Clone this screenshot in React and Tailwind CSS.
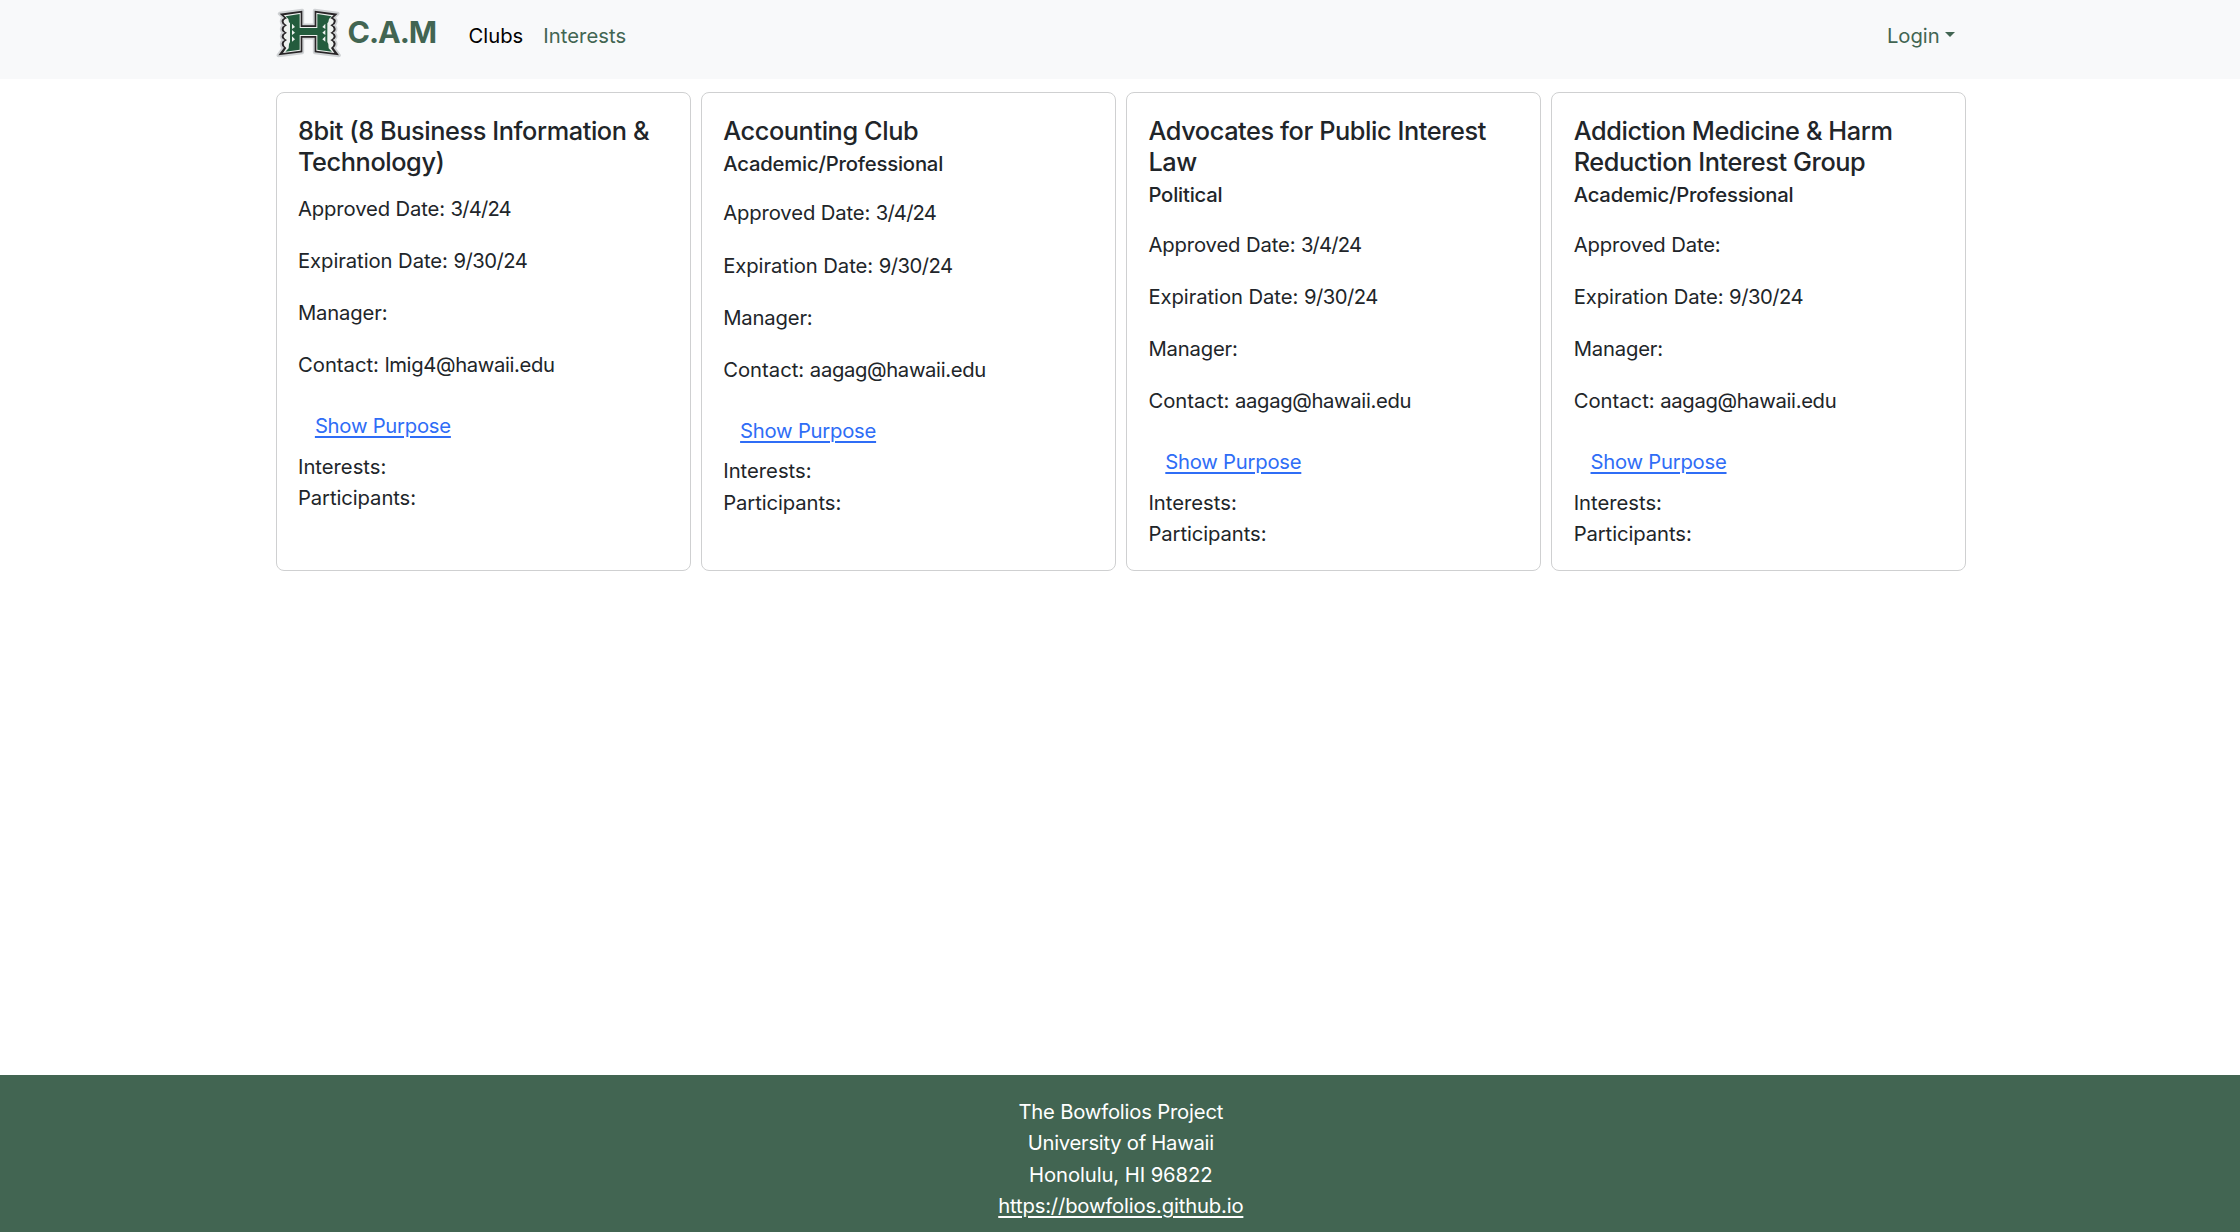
const clubs = [
  {
    name: "8bit (8 Business Information & Technology)",
    type: "",
    approved: "3/4/24",
    expiration: "9/30/24",
    contact: "lmig4@hawaii.edu",
  },
  {
    name: "Accounting Club",
    type: "Academic/Professional",
    approved: "3/4/24",
    expiration: "9/30/24",
    contact: "aagag@hawaii.edu",
  },
  {
    name: "Advocates for Public Interest Law",
    type: "Political",
    approved: "3/4/24",
    expiration: "9/30/24",
    contact: "aagag@hawaii.edu",
  },
  {
    name: "Addiction Medicine & Harm Reduction Interest Group",
    type: "Academic/Professional",
    approved: "",
    expiration: "9/30/24",
    contact: "aagag@hawaii.edu",
  },
];

const OUTLINE =
  "M29 41 L97 32 V76 H134 V32 L203 41 L189 54 Q199 58 197 65 Q196 73 188 76 Q197 80 197 87 Q197 95 188 98 Q197 102 197 109 Q197 117 188 120 Q197 124 197 131 Q197 139 190 143 L207 166 L134 157 V113 H97 V157 L25 166 L42 143 Q35 139 35 131 Q35 124 44 120 Q35 117 35 109 Q35 102 44 98 Q35 95 35 87 Q35 80 44 76 Q36 73 35 65 Q34 58 43 54 Z";

const INNER =
  "M41 46 L92 38 V81 H139 V38 L191 46 L181 55 Q193 60 191 66 Q190 72 181 76 Q191 81 191 87 Q191 94 181 98 Q191 103 191 109 Q191 116 181 120 Q191 125 191 131 Q191 138 183 144 L193 159 L139 152 V108 H92 V152 L39 159 L49 144 Q41 138 41 131 Q41 125 51 120 Q41 116 41 109 Q41 103 51 98 Q41 94 41 87 Q41 81 51 76 Q42 72 41 66 Q39 60 51 55 Z";

const GREEN =
  "M47 49 L89 42 V84 H142 V42 L185 49 L177 57 L175 66 L172 70 V126 L175 132 L176 145 L186 155 L142 149 V105 H89 V149 L46 155 L56 145 L57 132 L60 126 V70 L57 66 L55 57 Z";

function Logo() {
  return (
    <svg className="h-[64px] w-[80px] shrink-0" viewBox="0 0 240 192" aria-hidden="true">
      <path d={OUTLINE} fill="#c3c6c9" stroke="#bfc2c5" strokeWidth="11" strokeLinejoin="round" opacity="0.7" />
      <path d={OUTLINE} fill="#282527" />
      <path d={INNER} fill="#eef2ef" />
      <path d={GREEN} fill="#235c3d" />
      <path
        d="M66 71 L75 81 L66 87 Z M66 90 L75 98 L66 105 Z M66 109 L75 118 L66 125 Z M166 71 L157 81 L166 87 Z M166 90 L157 98 L166 105 Z M166 109 L157 118 L166 125 Z"
        fill="#eef2ef"
      />
    </svg>
  );
}

function NavBar() {
  return (
    <header className="h-[79px] bg-[#f8f9fa]">
      <div className="mx-auto flex h-16 w-[1700px] items-start leading-[31.3px] text-[#426552]">
        <a className="flex items-start" href="#home">
          <Logo />
          <span className="-ml-[2.5px] mt-[17px] w-[112.5px] text-[30.4px] font-bold tracking-[-0.034em]">C.A.M</span>
        </a>
        <nav className="mt-[20px] flex flex-1 text-[20.24px]">
          <a className="ml-[8.5px] w-[74.7px] text-black" href="#clubs">Clubs</a>
          <a className="tracking-[0.003em]" href="#interests">Interests</a>
          <button className="ml-auto mr-[14.7px] flex items-start">
            Login
            <span className="ml-[5.6px] mt-[12px] border-x-[5.6px] border-t-[5.6px] border-x-transparent border-t-[#426552]" />
          </button>
        </nav>
      </div>
    </header>
  );
}

function ClubCard({ club }) {
  return (
    <article className="rounded-[8px] border border-[#cfd0d1] px-[21.2px] pb-[20.6px] pt-[21.2px] leading-[31.3px]">
      <h2 className="pt-px text-[25.3px] font-medium tracking-[-0.016em]">{club.name}</h2>
      {club.type ? (
        <h3 className="mb-[18.1px] mt-[1.6px] font-medium tracking-[-0.009em]">{club.type}</h3>
      ) : (
        <div className="h-[15px]" />
      )}
      <div className="flex flex-col items-start gap-[20.87px]">
        <p className="tracking-[-0.006em]">
          Approved Date: <span className="tracking-[-0.04em]">{club.approved}</span>
        </p>
        <p className="tracking-[-0.003em]">
          Expiration Date: <span className="tracking-[-0.025em]">{club.expiration}</span>
        </p>
        <p className="tracking-[-0.008em]">Manager:</p>
        <p>
          Contact: <span className="tracking-[-0.017em]">{club.contact}</span>
        </p>
        <button className="ml-[16.9px] h-[49.4px] pb-[0.4px] tracking-[-0.0115em] text-[#2f6df6] underline decoration-[1.6px] underline-offset-[2.5px]">
          Show Purpose
        </button>
      </div>
      <p>Interests:</p>
      <p className="tracking-[-0.004em]">Participants:</p>
    </article>
  );
}

function Footer() {
  return (
    <footer className="flex h-[157px] flex-col items-center bg-[#426552] pl-[1.6px] pt-[21px] text-center leading-[31.3px] tracking-[-0.009em] text-white">
      <p>The Bowfolios Project</p>
      <p className="tracking-[-0.013em]">University of Hawaii</p>
      <p className="tracking-[-0.004em]">Honolulu, HI 96822</p>
      <a className="tracking-[-0.008em] underline decoration-[1.6px] underline-offset-[2.5px]" href="https://bowfolios.github.io">
        https://bowfolios.github.io
      </a>
    </footer>
  );
}

export default function App() {
  return (
    <div className="flex h-screen flex-col overflow-hidden bg-white font-['Inter',sans-serif] text-[20.24px] text-[#212529]">
      <NavBar />
      <main className="flex-1">
        <div className="mx-auto grid w-[1692.4px] grid-cols-4 gap-[10.5px] pl-[2px] pt-[13px]">
          {clubs.map((club) => (
            <ClubCard key={club.name} club={club} />
          ))}
        </div>
      </main>
      <Footer />
    </div>
  );
}
